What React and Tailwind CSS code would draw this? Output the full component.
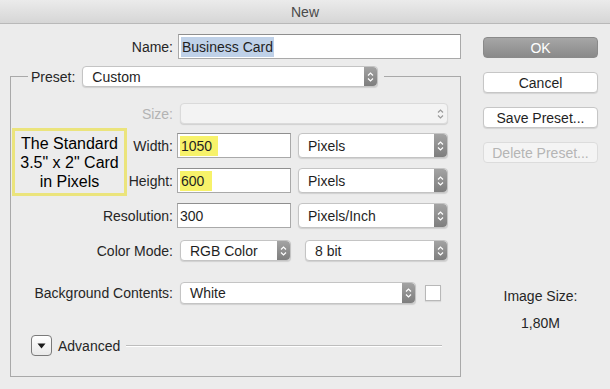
import React from 'react';

const Stepper = ({ disabled }) => (
  <div
    className={`w-[13px] flex items-center justify-center rounded-r-[4px] ${
      disabled ? 'bg-transparent' : 'bg-gradient-to-b from-[#a3a3a3] to-[#7e7e7e]'
    }`}
  >
    <svg width="7" height="12" viewBox="0 0 7 12" fill="none">
      <path d="M1 4.5 L3.5 2 L6 4.5" stroke={disabled ? '#9a9a9a' : '#ffffff'} strokeWidth="1.2" />
      <path d="M1 7.5 L3.5 10 L6 7.5" stroke={disabled ? '#9a9a9a' : '#ffffff'} strokeWidth="1.2" />
    </svg>
  </div>
);

const Select = ({ value, className = '', disabled }) => (
  <div
    className={`h-full flex items-stretch rounded-[4px] border shadow-[0_1px_1px_rgba(0,0,0,0.12)] ${
      disabled ? 'border-[#dadada] bg-[#f3f3f3]' : 'border-[#c4c4c4] bg-white'
    } ${className}`}
  >
    <div className="flex-1 flex items-center pl-[9px] text-[#1f1f1f]">{value}</div>
    <Stepper disabled={disabled} />
  </div>
);

const Input = ({ children }) => (
  <div className="w-[114px] h-full flex items-center bg-white border border-[#a9a9a9] border-t-[#8f8f8f] pl-[2px] text-[#1f1f1f]">
    {children}
  </div>
);

const Label = ({ children }) => (
  <div className="w-[162px] shrink-0 text-right text-[#262626]">{children}</div>
);

const Button = ({ children, variant }) => {
  const styles = {
    primary: 'bg-gradient-to-b from-[#a6a6a6] to-[#8a8a8a] border-[#8a8a8a] text-white',
    normal: 'bg-white border-[#c6c6c6] text-[#1f1f1f] shadow-[0_1px_1px_rgba(0,0,0,0.1)]',
    disabled: 'bg-[#f4f4f4] border-[#dcdcdc] text-[#b5b5b5]',
  };
  return (
    <div className={`h-[21px] w-[115px] rounded-[4px] border flex items-center justify-center ${styles[variant]}`}>
      {children}
    </div>
  );
};

export default function App() {
  return (
    <div
      className="w-[610px] h-[389px] bg-[#ececec] text-[14px] leading-none overflow-hidden"
      style={{ fontFamily: '"Liberation Sans", Arial, sans-serif' }}
    >
      {/* Title bar */}
      <div className="h-[24px] bg-gradient-to-b from-[#ebebeb] to-[#d6d6d6] border-b border-[#b9b9b9] flex items-center justify-center text-[#4a4a4a]">
        New
      </div>

      <div className="flex">
        {/* Left form */}
        <div className="w-[473px] shrink-0">
          {/* Name */}
          <div className="flex items-center h-[25px] mt-[10px] ml-[11px]">
            <Label>Name:</Label>
            <div className="ml-[5px] w-[283px] h-full flex items-center bg-white border border-[#a9a9a9] border-t-[#8f8f8f] pl-[2px]">
              <span className="bg-[#bfd1e8] text-[#1f1f1f] px-[1px] py-[3px]">Business Card</span>
            </div>
          </div>

          {/* Preset fieldset */}
          <fieldset className="relative ml-[10px] mt-[7px] w-[451px] border border-[#a9a9a9] pb-[20px]">
            <legend className="ml-[17px] pl-[3px] pr-[6px] h-[21px] flex items-center">
              <span className="text-[#262626]">Preset:</span>
              <Select value="Custom" className="ml-[7px] w-[296px]" />
            </legend>

            {/* Annotation */}
            <div className="absolute left-[1px] top-[41px] w-[115px] h-[68px] border-[3px] border-[#ebe47c] bg-[#ececec] flex flex-col items-center justify-center text-[16px] leading-[19px] text-black">
              <span>The Standard</span>
              <span>3.5" x 2" Card</span>
              <span>in Pixels</span>
            </div>

            <div className="flex items-center h-[21px] mt-[16px]">
              <Label><span className="text-[#b3b3b3]">Size:</span></Label>
              <Select value="" disabled className="ml-[7px] w-[268px]" />
            </div>

            <div className="flex items-center h-[25px] mt-[9px]">
              <Label>Width:</Label>
              <div className="ml-[4px] h-full">
                <Input><span className="bg-[#f7f26a] pl-[1px] pr-[6px] py-[3px]">1050</span></Input>
              </div>
              <Select value="Pixels" className="ml-[7px] w-[150px] h-[21px]" />
            </div>

            <div className="flex items-center h-[25px] mt-[10px]">
              <Label>Height:</Label>
              <div className="ml-[4px] h-full">
                <Input><span className="bg-[#f7f26a] pl-[1px] pr-[8px] py-[3px]">600</span></Input>
              </div>
              <Select value="Pixels" className="ml-[7px] w-[150px] h-[21px]" />
            </div>

            <div className="flex items-center h-[25px] mt-[10px]">
              <Label>Resolution:</Label>
              <div className="ml-[4px] h-full">
                <Input>300</Input>
              </div>
              <Select value="Pixels/Inch" className="ml-[7px] w-[150px] h-[21px]" />
            </div>

            <div className="flex items-center h-[21px] mt-[12px]">
              <Label>Color Mode:</Label>
              <Select value="RGB Color" className="ml-[7px] w-[111px]" />
              <Select value="8 bit" className="ml-[14px] w-[143px]" />
            </div>

            <div className="flex items-center h-[22px] mt-[21px]">
              <Label>Background Contents:</Label>
              <Select value="White" className="ml-[7px] w-[236px]" />
              <div className="ml-[9px] w-[16px] h-[16px] bg-white border border-[#b8b8b8] shadow-[0_1px_1px_rgba(0,0,0,0.08)]" />
            </div>

            <div className="flex items-center h-[21px] mt-[31px] pl-[20px]">
              <div className="w-[21px] h-[21px] rounded-[4px] border border-[#7a7a7a] bg-gradient-to-b from-white to-[#e9e9e9] flex items-center justify-center">
                <svg width="9" height="6" viewBox="0 0 9 6">
                  <path d="M0.5 0.5 H8.5 L4.5 5.5 Z" fill="#1a1a1a" />
                </svg>
              </div>
              <span className="ml-[6px] text-[#262626]">Advanced</span>
              <div className="ml-[6px] w-[316px] h-[2px] border-t border-[#bdbdbd] border-b border-b-white" />
            </div>
          </fieldset>
        </div>

        {/* Right buttons */}
        <div className="ml-[10px] w-[115px] flex flex-col items-center">
          <div className="mt-[13px] flex flex-col gap-[14px]">
            <Button variant="primary">OK</Button>
            <Button variant="normal">Cancel</Button>
            <Button variant="normal">Save Preset...</Button>
            <Button variant="disabled">Delete Preset...</Button>
          </div>
          <div className="mt-[126px] text-[#262626]">Image Size:</div>
          <div className="mt-[13px] text-[#262626]">1,80M</div>
        </div>
      </div>
    </div>
  );
}
